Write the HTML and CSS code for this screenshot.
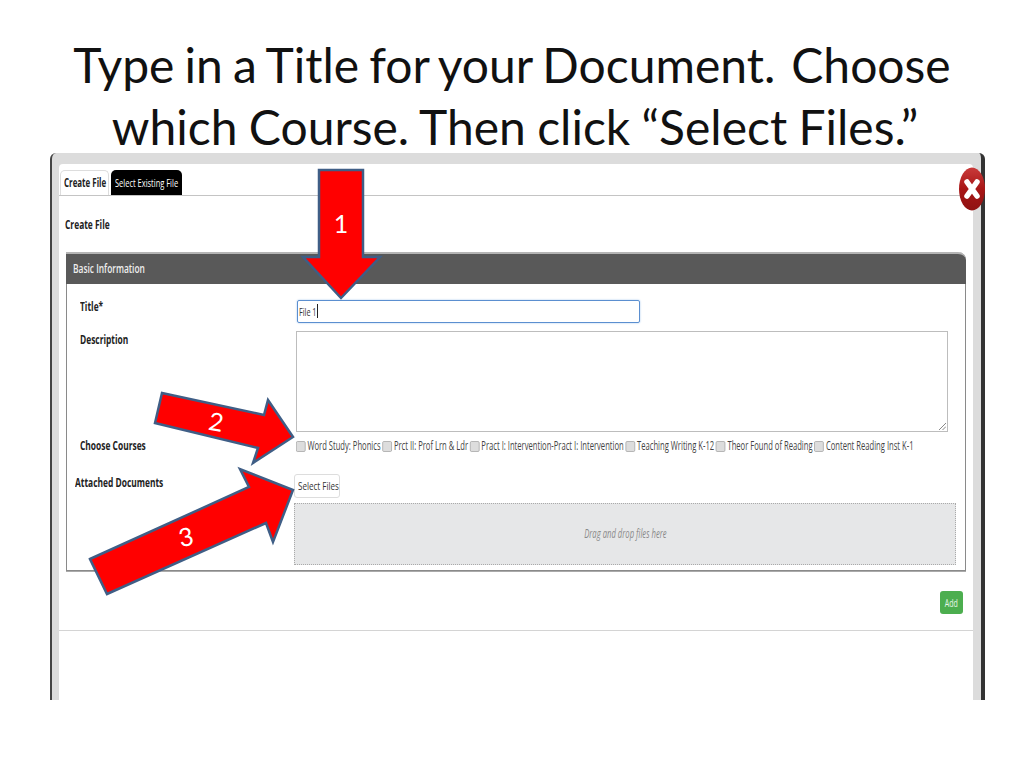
FILE: index.html
```html
<!DOCTYPE html>
<html lang="en">
<head>
<meta charset="utf-8">
<title>Type in a Title for your Document</title>
<link rel="stylesheet" href="styles.css">
</head>
<body>
<main class="slide">
  <h1 class="slide-title"><span class="line line-1">Type in a Title for your Document.&thinsp; Choose</span><span class="line line-2">which Course. Then click “Select Files.”</span></h1>
  <section class="shot">
    <div class="modal">
      <div class="tabs">
        <span class="tab tab-active"><span class="sq">Create File</span></span>
        <span class="tab tab-dark"><span class="sq">Select Existing File</span></span>
      </div>
      <div class="heading"><span class="sq">Create File</span></div>
      <div class="panel">
        <div class="panel-head"><span class="sq">Basic Information</span></div>
        <div class="panel-body">
          <div class="row row-title">
            <div class="label"><span class="sq">Title*</span></div>
            <div class="input"><span class="sq">File 1</span><i class="caret"></i></div>
          </div>
          <div class="row row-desc">
            <div class="label"><span class="sq">Description</span></div>
            <div class="textarea"><svg class="grip" width="7" height="7" viewBox="0 0 7 7"><path d="M0 7 7 0M3.500 7 7 3.500" stroke="#888" fill="none"/></svg></div>
          </div>
          <div class="row row-courses">
            <div class="label"><span class="sq">Choose Courses</span></div>
            <div class="courses">
              <span class="course"><i class="check"></i>Word Study: Phonics</span>
              <span class="course"><i class="check"></i>Prct II: Prof Lrn &amp; Ldr</span>
              <span class="course"><i class="check"></i>Pract I: Intervention-Pract I: Intervention</span>
              <span class="course"><i class="check"></i>Teaching Writing K-12</span>
              <span class="course"><i class="check"></i>Theor Found of Reading</span>
              <span class="course"><i class="check"></i>Content Reading Inst K-1</span>
            </div>
          </div>
          <div class="row row-docs">
            <div class="label label-docs"><span class="sq">Attached Documents</span></div>
            <div class="docs">
              <div class="btn-files"><span class="sq">Select Files</span></div>
              <div class="dropzone"><em class="sq-center">Drag and drop files here</em></div>
            </div>
          </div>
        </div>
      </div>
      <div class="actions"><div class="btn-add"><span class="sq-center">Add</span></div></div>
      <div class="footer-rule"></div>
    </div>
    <svg class="close" width="28" height="44" viewBox="0 0 28 44">
      <defs><linearGradient id="red" x1="0" y1="0" x2="0" y2="1"><stop offset="0" stop-color="#c93a3a"/><stop offset=".5" stop-color="#a81616"/><stop offset="1" stop-color="#8f1212"/></linearGradient></defs>
      <ellipse cx="14" cy="22" rx="13" ry="21.500" fill="url(#red)"/>
      <path d="M9 15 19 29M19 15 9 29" stroke="#fff" stroke-width="5.500" stroke-linecap="round"/>
    </svg>
  </section>
  <svg class="arrows" width="1024" height="768" viewBox="0 0 1024 768">
    <g class="arrow">
      <polygon points="319,170 363,170 363,257 380,257 341,298 303,257 319,257"/>
      <polygon points="162,393 264,415 268,400 293,437 253,463 258,448 155,423"/>
      <polygon points="90,559 249,487 240,469 293,490 273,542 266,523 107,594"/>
    </g>
    <text class="num" x="341" y="233">1</text>
    <text class="num" x="216" y="431" transform="rotate(10 216 423)">2</text>
    <text class="num" x="186" y="546" transform="rotate(-12 186 537)">3</text>
  </svg>
</main>
</body>
</html>
```
FILE: styles.css
```css
* { box-sizing: border-box; }
html, body { margin: 0; padding: 0; background: #fff; }
.slide { position: relative; width: 1024px; height: 768px; overflow: hidden; padding-top: 34px; }
.slide-title {
  margin: 0; height: 119px; font: 400 48px/62px Lato, "Open Sans", sans-serif;
  color: #111; text-align: center;
}
.line { display: block; }
.line-1 { word-spacing: -2.200px; }
.line-2 { word-spacing: -1px; padding-left: 6px; }
.shot {
  position: relative; margin-left: 50px; width: 935px; height: 547px;
  background: #dcdcdc; border-left: 2px solid #444; border-right: 4px solid #333;
  border-radius: 6px 6px 0 0; padding: 11px 8px 0 7px;
}
.modal {
  height: 536px; background: #fff; border-radius: 4px 4px 0 0;
  font: 400 12px/16px "Open Sans", sans-serif; color: #222;
}
.sq { display: inline-block; white-space: nowrap; transform: scaleX(.7); transform-origin: left center; }
.sq-center { display: inline-block; white-space: nowrap; transform: scaleX(.64); }
.tabs { display: flex; height: 32px; padding: 6px 0 0 1px; gap: 2px; border-bottom: 1px solid #c4c4c4; }
.tab { display: block; height: 25px; line-height: 26px; border-radius: 5px 5px 0 0; font-size: 12px; overflow: hidden; }
.tab-active { width: 49px; padding-left: 3px; font-weight: 700; background: #fff; border: 1px solid #ddd; border-bottom: 0; line-height: 24px; }
.tab-active .sq { transform: scaleX(.66); }
.tab-dark { width: 71px; padding-left: 4px; background: #000; color: #fff; font-size: 11px; }
.tab-dark .sq { transform: scaleX(.68); }
.heading { height: 56px; padding: 21px 0 0 6px; font-weight: 700; }
.panel { margin-left: 7px; width: 900px; height: 319px; border: 1px solid #8a8a8a; border-top: 0; border-radius: 0 8px 0 0; box-shadow: 0 1px 0 #aaa; }
.panel-head { height: 32px; padding: 7px 0 0 7px; margin-left: -1px; margin-right: -1px; background: #595959; color: #eee; font-weight: 600; border-top: 2px solid #b5b5b5; border-radius: 0 8px 0 0; }
.row { display: flex; }
.label { width: 230px; padding-left: 13px; font-weight: 700; flex: none; color: #222; }
.row-title { height: 47px; padding-top: 16px; }
.row-title .label { margin-top: -1px; }
.input { width: 343px; height: 23px; border: 1px solid #5b8fd0; border-radius: 2px; padding: 3px 0 0 1px; font-size: 11px; color: #333; box-shadow: 0 0 2px #9cc0ea; display: flex; }
.input .sq { width: 18px; transform: scaleX(.66); }
.caret { display: block; width: 1px; height: 14px; background: #222; }
.row-desc { height: 107px; }
.textarea { position: relative; margin-left: -1px; width: 652px; height: 101px; border: 1px solid #bdbdbd; flex: none; }
.grip { position: absolute; right: 1px; bottom: 1px; }
.row-desc .label { padding-top: 1px; }
.row-courses { height: 36px; align-items: flex-start; }
.courses { display: flex; gap: 3px; width: 950px; transform: scaleX(.635); transform-origin: left center; white-space: nowrap; color: #444; flex: none; margin-left: -1px; }
.course { display: inline-flex; align-items: center; gap: 3px; }
.check { display: block; width: 15px; height: 11px; background: #ddd; border: 1px solid #a9a9a9; border-radius: 2px; }
.row-docs { height: 96px; }
.label-docs { width: 227px; padding-left: 8px; padding-top: 1px; }
.docs { width: 662px; flex: none; }
.btn-files { width: 46px; height: 24px; padding: 3px 0 0 3px; background: #fff; border: 1px solid #ddd; border-radius: 3px; color: #333; font-size: 11.500px; }
.dropzone { height: 62px; margin-top: 5px; background: #e6e7e8; border: 1px dotted #aaa; display: flex; align-items: center; justify-content: center; color: #8a8a8a; font-size: 12px; }
.actions { display: flex; justify-content: flex-end; height: 59px; padding: 20px 10px 0 0; }
.btn-add { width: 23px; height: 23px; background: #4cae4f; border-radius: 3px; color: #e8f7e8; font-size: 11px; line-height: 23px; text-align: center; }
.footer-rule { border-top: 1px solid #d4d4d4; }
.close { position: absolute; top: 14px; right: -5px; }
.arrows { position: absolute; left: 0; top: 0; pointer-events: none; }
.arrow polygon { fill: #f00; stroke: #3f5e86; stroke-width: 2.500; stroke-linejoin: miter; }
.num { font-family: Lato, sans-serif; font-size: 25px; font-weight: 400; fill: #fff; text-anchor: middle; }
```
